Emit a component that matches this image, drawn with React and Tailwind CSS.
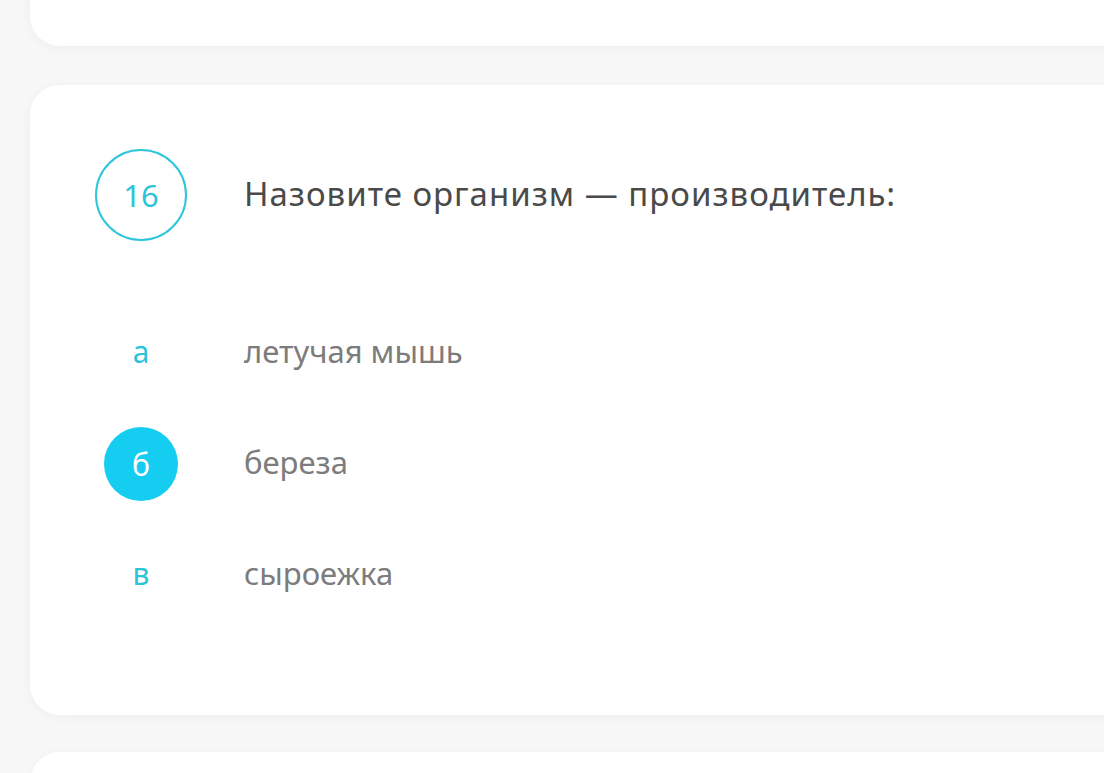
export default function App() {
  const options = [
    { k: "а", t: "летучая мышь", sel: false },
    { k: "б", t: "береза", sel: true },
    { k: "в", t: "сыроежка", sel: false },
  ];
  return (
    <div
      className="w-[1104px] h-[773px] overflow-hidden bg-[#f7f7f7] pl-[30px]"
      style={{ fontFamily: '"Noto Sans", "Open Sans", sans-serif' }}
    >
      <div className="w-[1120px] h-[100px] -mt-[54px] bg-white rounded-[30px] shadow-[0_2px_12px_rgba(0,0,0,0.04)]" />
      <div className="w-[1120px] h-[630px] mt-[39px] bg-white rounded-[30px] shadow-[0_2px_12px_rgba(0,0,0,0.04)] pt-[64px] pl-[65px]">
        <div className="flex items-center">
          <div className="w-[92px] h-[92px] rounded-full border-2 border-[#2fc6dc] flex items-center justify-center text-[#2bc4d9] text-[31px]">
            16
          </div>
          <div className="ml-[57px] text-[33px] tracking-[1px] text-[#4a4a4a] -mt-[2px]">
            Назовите организм — производитель:
          </div>
        </div>
        <div className="mt-[75px] flex flex-col gap-[37px]">
          {options.map((o) => (
            <div key={o.k} className="flex items-center h-[74px]">
              <div className="w-[92px] flex items-center justify-center">
                {o.sel ? (
                  <div className="w-[74px] h-[74px] rounded-full bg-[#14cdf0] flex items-center justify-center text-white text-[30px]">
                    {o.k}
                  </div>
                ) : (
                  <div className="text-[#2bc4d9] text-[30px] -mt-[3px]">{o.k}</div>
                )}
              </div>
              <div className="ml-[57px] text-[31px] text-[#7c7c7c] -mt-[3px]">{o.t}</div>
            </div>
          ))}
        </div>
      </div>
      <div className="w-[1120px] h-[100px] mt-[37px] bg-white rounded-[30px] shadow-[0_2px_12px_rgba(0,0,0,0.04)]" />
    </div>
  );
}
